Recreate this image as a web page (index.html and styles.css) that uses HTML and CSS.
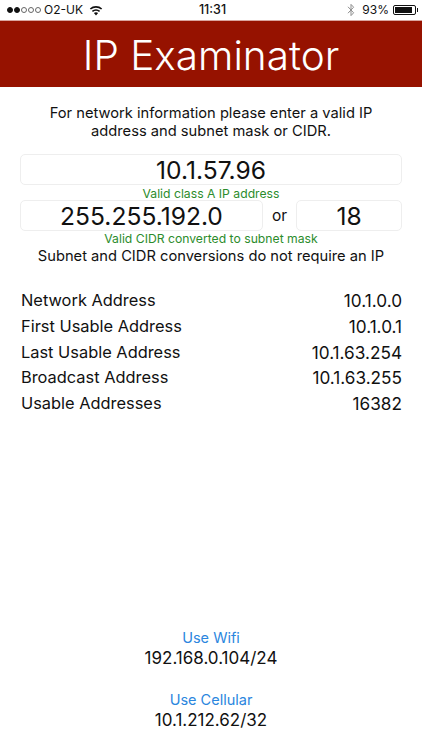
FILE: index.html
```html
<!DOCTYPE html>
<html lang="en">
<head>
<meta charset="utf-8">
<title>IP Examinator</title>
<link rel="stylesheet" href="styles.css">
</head>
<body>
<div class="status">
  <div class="status-left">
    <span class="signal"><i class="on"></i><i class="on"></i><i></i><i></i><i></i></span>
    <span class="carrier">O2-UK</span>
    <svg class="wifi" width="14" height="11" viewBox="0 0 14 11"><path d="M7 10.6 L4.9 8.1 A3.2 3.2 0 0 1 9.1 8.1 Z M3.9 7 L2.9 5.8 A6.2 6.2 0 0 1 11.1 5.8 L10.1 7 A4.7 4.7 0 0 0 3.9 7 Z M1.9 4.6 L0.8 3.4 A9.3 9.3 0 0 1 13.2 3.4 L12.1 4.6 A7.8 7.8 0 0 0 1.9 4.6 Z" fill="#111"/></svg>
  </div>
  <div class="time">11:31</div>
  <div class="status-right">
    <svg class="bt" width="8" height="14" viewBox="0 0 8 14"><path d="M1 3.8 L6.6 9.8 L4 12.6 V1.4 L6.6 4.2 L1 10.2" fill="none" stroke="#8e8e8e" stroke-width="1"/></svg>
    <span class="pct">93%</span>
    <span class="battery"><span class="battery-fill"></span></span><span class="battery-tip"></span>
  </div>
</div>
<header class="title">IP Examinator</header>
<main class="content">
  <p class="intro">For network information please enter a valid IP address and subnet mask or CIDR.</p>
  <div class="field field-ip">10.1.57.96</div>
  <div class="valid valid-ip">Valid class A IP address</div>
  <div class="mask-row">
    <div class="field field-mask">255.255.192.0</div>
    <span class="or">or</span>
    <div class="field field-cidr">18</div>
  </div>
  <div class="valid">Valid CIDR converted to subnet mask</div>
  <p class="note">Subnet and CIDR conversions do not require an IP</p>
  <dl class="results">
    <div class="row"><dt>Network Address</dt><dd>10.1.0.0</dd></div>
    <div class="row"><dt>First Usable Address</dt><dd>10.1.0.1</dd></div>
    <div class="row"><dt>Last Usable Address</dt><dd>10.1.63.254</dd></div>
    <div class="row"><dt>Broadcast Address</dt><dd>10.1.63.255</dd></div>
    <div class="row"><dt>Usable Addresses</dt><dd>16382</dd></div>
  </dl>
  <div class="sources">
    <div class="source"><a class="link">Use Wifi</a><div class="addr">192.168.0.104/24</div></div>
    <div class="source"><a class="link">Use Cellular</a><div class="addr">10.1.212.62/32</div></div>
  </div>
</main>
</body>
</html>
```
FILE: styles.css
```css
* { box-sizing: border-box; }
html, body { margin: 0; padding: 0; }
body {
  width: 422px;
  height: 750px;
  overflow: hidden;
  background: #fff;
  color: #111;
  font-family: Inter, "Liberation Sans", sans-serif;
  display: flex;
  flex-direction: column;
}
.status {
  height: 20px;
  flex: none;
  padding: 0 4px 0 7px;
  display: grid;
  grid-template-columns: 1fr auto 1fr;
  align-items: center;
  font-size: 12px;
  line-height: 20px;
}
.status-left { display: flex; align-items: center; }
.signal { display: flex; gap: 1px; margin-right: 3px; }
.signal i {
  width: 6px;
  height: 6px;
  border-radius: 50%;
  border: 0.7px solid #666;
}
.signal i.on { background: #111; border-color: #111; }
.carrier { margin-right: 6px; }
.time { font-weight: 500; font-size: 12.5px; }
.status-right { display: flex; align-items: center; justify-content: flex-end; }
.bt { margin-right: 7px; }
.pct { margin-right: 4px; }
.battery {
  width: 23px;
  height: 10px;
  border: 1px solid #111;
  border-radius: 2px;
  padding: 1px;
  display: block;
}
.battery-fill { display: block; width: 92%; height: 100%; background: #111; }
.battery-tip { width: 1.5px; height: 4px; background: #111; margin-left: 0.5px; }
.title {
  height: 67px;
  flex: none;
  background: #961200;
  color: #fff;
  text-align: center;
  font-size: 40.5px;
  font-weight: 300;
  line-height: 70px;
  border-top: 1px solid #d9a59e;
}
.content { padding: 17px 20px 0; flex: 1; display: flex; flex-direction: column; }
.intro {
  margin: 0 auto;
  width: 345px;
  font-size: 14.7px;
  line-height: 18px;
  text-align: center;
}
.field {
  height: 31px;
  flex: none;
  border: 1px solid #eeeeee;
  border-radius: 5px;
  text-align: center;
  font-size: 24.6px;
  line-height: 30px;
}
.field-ip { margin-top: 14px; }
.valid {
  font-size: 12.2px;
  line-height: 15px;
  color: #2c8c2c;
  text-align: center;
}
.valid-ip { padding-top: 1px; height: 15px; }
.mask-row { display: flex; align-items: center; }
.field-mask { width: 243px; }
.or { width: 33px; flex: none; text-align: center; font-size: 15.5px; }
.field-cidr { width: 106px; }
.note { margin: 1px -10px 0; font-size: 14.7px; line-height: 18px; text-align: center; white-space: nowrap; }
.results { margin: 23px 0 0 1px; }
.row {
  display: flex;
  justify-content: space-between;
  font-size: 16.4px;
  line-height: 25.8px;
}
.row dt { margin: 0; }
.row dd { margin: 0; font-size: 17.2px; }
.sources { margin-top: auto; padding-bottom: 20px; }
.source { text-align: center; }
.source + .source { margin-top: 22px; }
.link { display: block; color: #2b86de; font-size: 14.5px; line-height: 20px; }
.addr { font-size: 17px; line-height: 20px; }
```
